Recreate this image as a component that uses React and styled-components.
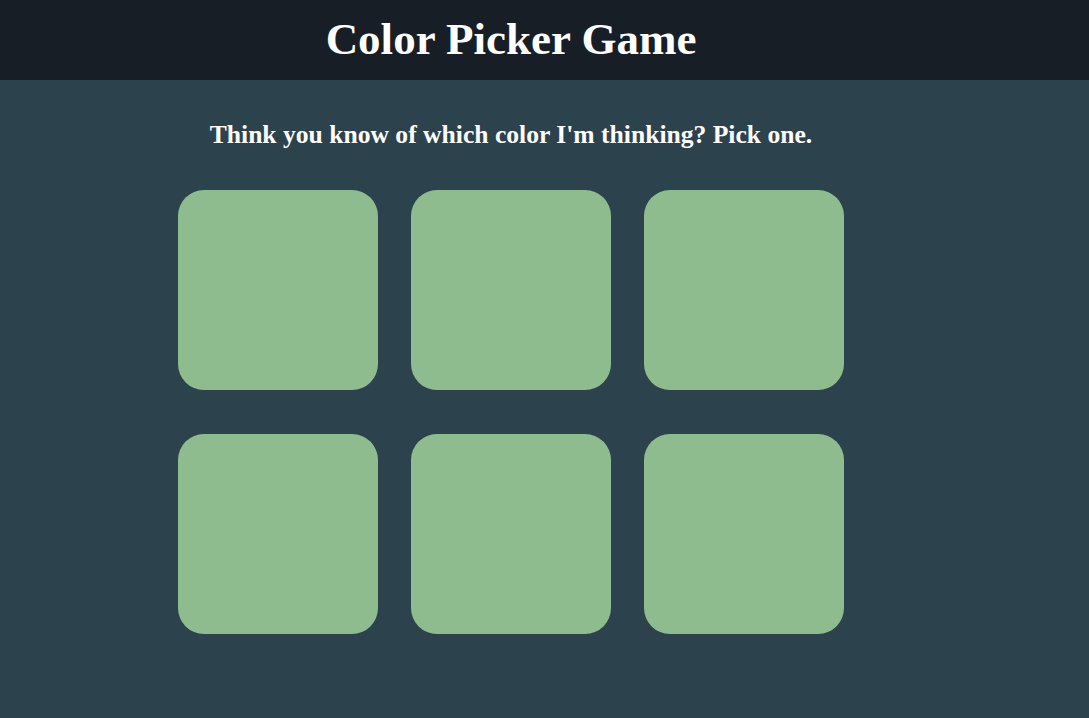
import React from "react"
import styled, { createGlobalStyle } from "styled-components"

const GlobalStyle = createGlobalStyle`
  html, body {
    margin: 0;
    padding: 0;
    background: #2c424d;
    font-family: "Liberation Serif", "Times New Roman", serif;
    color: #ffffff;
  }
`

const Header = styled.header`
  height: 80px;
  background: #171e26;
`

const Inner = styled.div`
  width: 1022px;
  display: flex;
  flex-direction: column;
  align-items: center;
`

const Title = styled.h1`
  margin: 0;
  line-height: 78px;
  font-size: 45px;
  font-weight: 700;
`

const Prompt = styled.h2`
  margin: 40px 0 0;
  line-height: 30px;
  font-size: 25.6px;
  font-weight: 700;
`

const Grid = styled.div`
  display: grid;
  grid-template-columns: repeat(3, 200px);
  column-gap: 33px;
  row-gap: 44px;
  margin-top: 40px;
`

const Tile = styled.button`
  width: 200px;
  height: 200px;
  border: none;
  padding: 0;
  border-radius: 26px;
  background: ${props => props.color || "#8fbc8f"};
  cursor: pointer;
`

const tiles = ["#8fbc8f", "#8fbc8f", "#8fbc8f", "#8fbc8f", "#8fbc8f", "#8fbc8f"]

const App = () => (
  <>
    <GlobalStyle />
    <Header>
      <Inner>
        <Title>Color Picker Game</Title>
      </Inner>
    </Header>
    <Inner>
      <Prompt>Think you know of which color I'm thinking? Pick one.</Prompt>
      <Grid>
        {tiles.map((c, i) => (
          <Tile key={i} color={c} aria-label={`color ${i + 1}`} />
        ))}
      </Grid>
    </Inner>
  </>
)

export default App
